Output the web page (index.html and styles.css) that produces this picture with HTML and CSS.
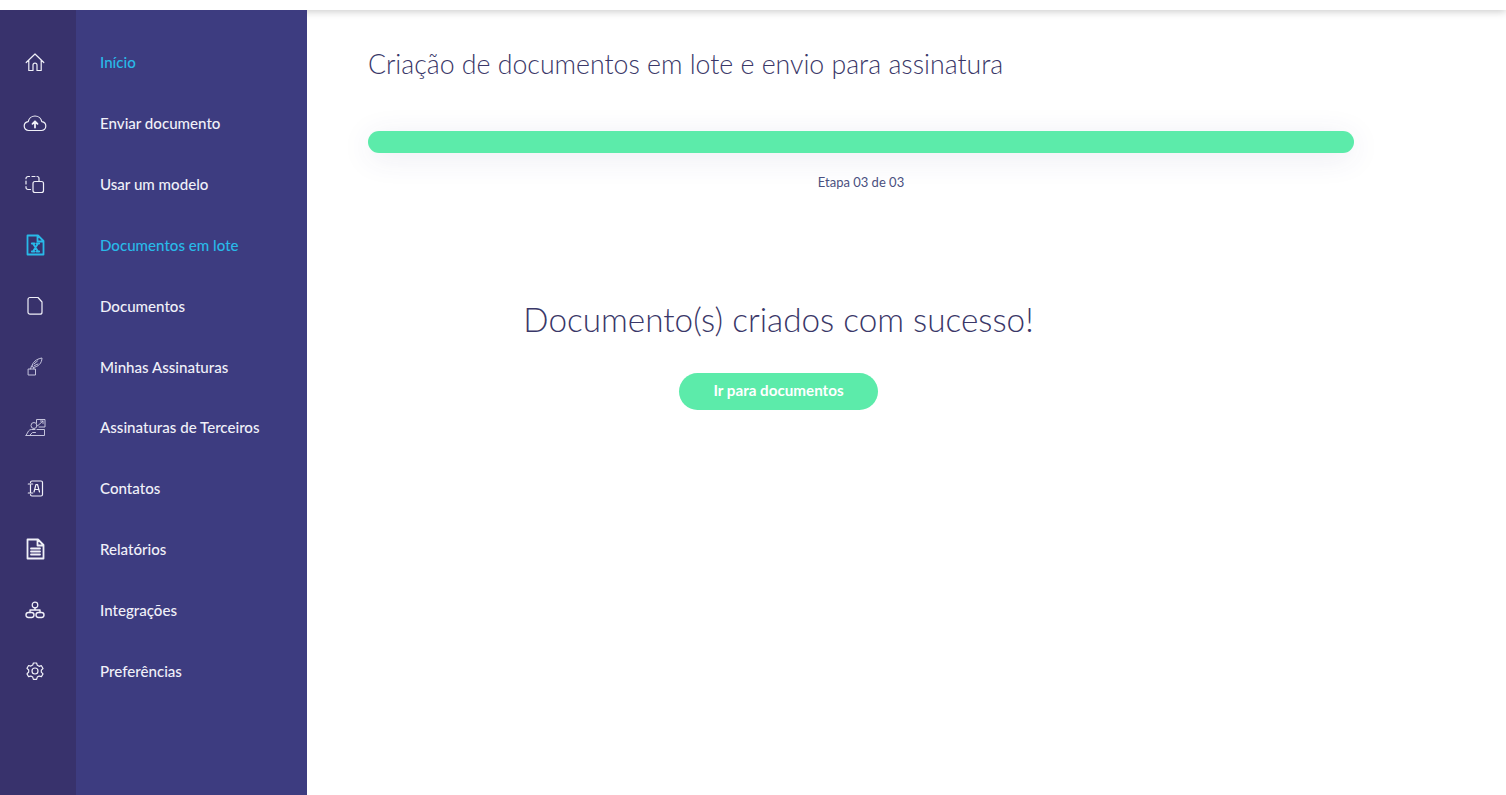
FILE: index.html
```html
<!DOCTYPE html>
<html lang="pt-BR">

<head>
  <meta charset="UTF-8">
  <meta name="viewport" content="width=device-width, initial-scale=1.0">
  <title>Documentos em lote</title>
  <link rel="stylesheet" href="styles.css">
</head>

<body>
  <header class="topbar"></header>

  <div class="layout">
    <aside class="sidebar">
      <ul class="menu">
        <li class="menu-item active-text">
          <span class="menu-icon">
            <svg viewBox="0 0 24 24"><path d="M3.200 12.500 12 4l8.800 8.500M5.800 10.500v10h4.200v-5.400a2 2 0 0 1 4 0v5.400h4.200v-10" /></svg>
          </span>
          <span>Início</span>
        </li>
        <li class="menu-item">
          <span class="menu-icon">
            <svg viewBox="0 0 24 24"><path d="M6.500 19.500H5.600A4.400 4.400 0 0 1 1.200 15.100a4.500 4.500 0 0 1 4-4.400A7 7 0 0 1 12 5a6.900 6.900 0 0 1 6.800 5.700 4.500 4.500 0 0 1 4 4.400 4.400 4.400 0 0 1-4.400 4.400z" /><path class="thick" d="M12 16.500v-6M9.500 12.800 12 10.300l2.500 2.500" /></svg>
          </span>
          <span>Enviar documento</span>
        </li>
        <li class="menu-item">
          <span class="menu-icon">
            <svg viewBox="0 0 24 24"><path d="M7.500 17.500H5a2 2 0 0 1-2-2v-1M3 12v-3M3 6.700V6.500a2 2 0 0 1 2-2h1.500M9 4.500h3M14 4.500a2 2 0 0 1 2 2V9" /><rect x="10" y="9.500" width="10.500" height="11" rx="2" /></svg>
          </span>
          <span>Usar um modelo</span>
        </li>
        <li class="menu-item active">
          <span class="menu-icon">
            <svg viewBox="0 0 24 24"><path class="thick" d="M4.500 2.500h10.500l5.500 5.500v13.500h-16zM14.500 2.500v6h6" /><path class="thick" d="m10 10.500 5 8M15 10.500l-5 8M8.800 10.500h2.700M13.500 10.500h2.700M8.800 18.500h2.700M13.500 18.500h2.700" /></svg>
          </span>
          <span>Documentos em lote</span>
        </li>
        <li class="menu-item">
          <span class="menu-icon">
            <svg viewBox="0 0 24 24"><path d="M7 3.500h8l4 4.500v10.200a2 2 0 0 1-2 2H7a2 2 0 0 1-2-2V5.500a2 2 0 0 1 2-2z" /></svg>
          </span>
          <span>Documentos</span>
        </li>
        <li class="menu-item">
          <span class="menu-icon dim">
            <svg viewBox="0 0 24 24"><path d="M5.500 14h7v6h-7zM7.500 14l1-3h1l1.500 3M9 11c.5-3.500 4-7 10-8-.3 5.500-3.500 8.500-8.500 9.500M11 9l3.500-3M11.500 10.500l3.500-1.500" /></svg>
          </span>
          <span>Minhas Assinaturas</span>
        </li>
        <li class="menu-item">
          <span class="menu-icon dim">
            <svg viewBox="0 0 24 24"><path d="M13.500 8V4.500H22v7.500h-6M15 10.500l5-4.500M17.500 6h2.500v2.500" /><circle cx="11" cy="10.500" r="3" /><path d="M3 20.500 5.500 16a3.500 3.500 0 0 1 3-1.500h3.500M14 14.500h7.500v6H13M3 20.500h10M6.500 20.500l3-3h3" /></svg>
          </span>
          <span>Assinaturas de Terceiros</span>
        </li>
        <li class="menu-item">
          <span class="menu-icon">
            <svg viewBox="0 0 24 24"><path d="M7.500 6.500a1.500 1.500 0 0 1 1.500-1.500h9a1.500 1.500 0 0 1 1.500 1.500v12a1.500 1.500 0 0 1-1.500 1.500H9a1.500 1.500 0 0 1-1.500-1.500M7.500 9v7M5.300 8h4.400M5.300 17h4.400" /><path d="m11 16 2-7.500h1.500l2 7.500M11.800 13.500h4" /></svg>
          </span>
          <span>Contatos</span>
        </li>
        <li class="menu-item">
          <span class="menu-icon">
            <svg viewBox="0 0 24 24"><path class="thick" d="M4.500 2.500h10.500l5.500 5.500v13.500h-16zM14.500 2.500v6h6" /><path class="thick" d="M8 11.500h9M8 14.500h9M8 17.500h9" /></svg>
          </span>
          <span>Relatórios</span>
        </li>
        <li class="menu-item">
          <span class="menu-icon">
            <svg viewBox="0 0 24 24"><circle cx="12" cy="7" r="2.800" /><path class="mid" d="M12 9.800V12M7 14.500V12h10v2.500" /><rect class="mid" x="3" y="14.500" width="8" height="5" rx="2.400" /><rect class="mid" x="13" y="14.500" width="8" height="5" rx="2.400" /></svg>
          </span>
          <span>Integrações</span>
        </li>
        <li class="menu-item">
          <span class="menu-icon">
            <svg viewBox="0 0 24 24"><circle cx="12" cy="12" r="3" /><path d="M10.400 4h3.200l.7 2.300 1.800 1 2.300-.6 1.600 2.800-1.700 1.700v2l1.700 1.700-1.600 2.800-2.300-.6-1.800 1-.7 2.300h-3.200l-.7-2.300-1.800-1-2.300.6-1.600-2.800L5.700 13v-2L4 9.300l1.600-2.800 2.300.6 1.800-1z" /></svg>
          </span>
          <span>Preferências</span>
        </li>
      </ul>
    </aside>

    <main class="content">
      <h1 class="title">Criação de documentos em lote e envio para assinatura</h1>

      <div class="progress"></div>
      <p class="step">Etapa 03 de 03</p>

      <section class="success">
        <h2 class="success-title">Documento(s) criados com sucesso!</h2>
        <a class="btn-green" href="#">Ir para documentos</a>
      </section>
    </main>
  </div>
</body>

</html>
```

FILE: styles.css
```css
* {
  box-sizing: border-box;
}

html,
body {
  height: 100%;
}

body {
  margin: 0;
  background: #fff;
  color: #3a3768;
  font-family: 'Lato', 'Open Sans', sans-serif;
  overflow: hidden;
}

.topbar {
  position: relative;
  z-index: 1;
  height: 10px;
  background: #fff;
  box-shadow: 0 1px 8px rgba(0, 0, 0, 0.24);
}

.layout {
  display: flex;
  height: calc(100vh - 10px);
}

.sidebar {
  position: relative;
  z-index: 2;
  flex: 0 0 307px;
  padding-top: 21.7px;
  background: linear-gradient(to right, #38326c 76px, #3d3c80 76px);
}

.menu {
  margin: 0;
  padding: 0;
  list-style: none;
}

.menu-item {
  display: flex;
  align-items: center;
  height: 60.9px;
  color: #f0f0f8;
  font-size: 15.1px;
  font-weight: 500;
  cursor: pointer;
}

.menu-icon {
  display: flex;
  justify-content: center;
  flex: 0 0 70px;
  margin-right: 30px;
}

.menu-icon svg {
  width: 24px;
  height: 24px;
  fill: none;
  stroke: #f0f0f8;
  stroke-width: 1.2;
  stroke-linejoin: round;
  stroke-linecap: round;
}

.menu-icon .thick {
  stroke-width: 1.8;
}

.menu-icon .mid {
  stroke-width: 1.4;
}

.menu-icon.dim svg {
  stroke: #c4c3dc;
  stroke-width: 1;
}

.active,
.active-text {
  color: #29b9e8;
}

.active .menu-icon svg {
  stroke: #29b9e8;
}

.content {
  flex: 1;
  padding: 35px 152px 0 61px;
}

.title {
  margin: 0 0 48px;
  font-size: 26.7px;
  font-weight: 300;
  line-height: 38px;
}

.progress {
  height: 22px;
  border-radius: 11px;
  background: #5cebaa;
  box-shadow: 0 5px 30px rgba(60, 60, 128, 0.1);
}

.step {
  margin: 20px 0 0;
  color: #4a5080;
  font-size: 13px;
  line-height: 18px;
  text-align: center;
}

.success {
  display: flex;
  flex-direction: column;
  align-items: center;
  width: 821px;
  margin-top: 105px;
}

.success-title {
  margin: 0 0 31px;
  font-size: 33.3px;
  font-weight: 300;
  line-height: 46px;
}

.btn-green {
  display: block;
  width: 199px;
  height: 37px;
  border-radius: 19px;
  background: #5cebaa;
  color: #fff;
  font-size: 15.2px;
  font-weight: 700;
  line-height: 35px;
  text-align: center;
  text-decoration: none;
}
```
